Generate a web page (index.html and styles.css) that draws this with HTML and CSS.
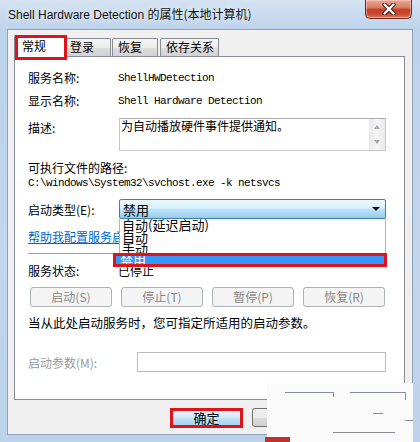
FILE: index.html
```html
<!DOCTYPE html>
<html lang="zh-CN">
<head>
<meta charset="utf-8">
<title>Shell Hardware Detection 的属性</title>
<link rel="stylesheet" href="styles.css">
</head>
<body>
<div class="window">
  <div class="titlebar">
    <span class="title">Shell Hardware Detection <span class="zh">的属性(本地计算机)</span></span>
    <div class="close">
      <svg width="14" height="12" viewBox="0 0 14 12">
        <path d="M2.5 1.5 L11.5 10.5 M11.5 1.5 L2.5 10.5" stroke="#4a1f18" stroke-width="4.4" stroke-linecap="round"/>
        <path d="M2.5 1.5 L11.5 10.5 M11.5 1.5 L2.5 10.5" stroke="#ffffff" stroke-width="2.4" stroke-linecap="round"/>
      </svg>
    </div>
  </div>

  <div class="client">
    <div class="tabs">
      <div class="tab active">常规</div>
      <div class="tab t2">登录</div>
      <div class="tab t3">恢复</div>
      <div class="tab t4">依存关系</div>
      <div class="mark tab-mark"></div>
    </div>

    <div class="panel">
      <div class="row">
        <span class="lbl">服务名称:</span>
        <span class="val">ShellHWDetection</span>
      </div>
      <div class="row r2">
        <span class="lbl">显示名称:</span>
        <span class="val">Shell Hardware Detection</span>
      </div>
      <div class="desc-row">
        <span class="lbl">描述:</span>
        <div class="textarea">
          <div class="txt">为自动播放硬件事件提供通知。</div>
          <div class="scroll">
            <span class="arr up"></span>
            <span class="arr down"></span>
          </div>
        </div>
      </div>
      <div class="row r-path">可执行文件的路径:</div>
      <div class="path">C:\windows\System32\svchost.exe -k netsvcs</div>

      <div class="type-row">
        <span class="lbl">启动类型(E):</span>
        <div class="select-wrap">
          <div class="select"><span>禁用</span><span class="caret"></span></div>
          <div class="list">
            <div class="opt">自动(延迟启动)</div>
            <div class="opt">自动</div>
            <div class="opt">手动</div>
          </div>
          <div class="sel">禁用</div>
        </div>
      </div>

      <div class="row r-link"><span class="link">帮助我配置服务启动选项。</span></div>
      <div class="sep"></div>

      <div class="row r-status">
        <span class="lbl">服务状态:</span>
        <span>已停止</span>
      </div>

      <div class="btns">
        <div class="btn dis">启动(S)</div>
        <div class="btn dis">停止(T)</div>
        <div class="btn dis">暂停(P)</div>
        <div class="btn dis">恢复(R)</div>
      </div>

      <div class="row r-info">当从此处启动服务时，您可指定所适用的启动参数。</div>

      <div class="param-row">
        <span class="lbl plbl">启动参数(M):</span>
        <div class="input"></div>
      </div>
    </div>

    <div class="footer">
      <div class="mark ok-mark"><div class="okbtn">确定</div></div>
      <div class="cancel"></div>
    </div>
  </div>

  <div class="smear">
    <span class="ln" style="left:18px;top:9px;width:48px"></span>
    <span class="ln v" style="left:66px;top:9px;height:5px"></span>
    <span class="ln" style="left:83px;top:9px;width:55px"></span>
    <span class="ln v" style="left:138px;top:9px;height:8px"></span>
    <span class="ln" style="left:106px;top:30px;width:10px"></span>
    <span class="ln" style="left:138px;top:37px;width:8px"></span>
    <span class="ln" style="left:66px;top:49px;width:62px"></span>
  </div>
  <div class="redstrip"></div>
</div>
</body>
</html>
```

FILE: styles.css
```css
* { box-sizing: border-box; }
html, body { margin: 0; padding: 0; }
body {
  width: 420px;
  height: 442px;
  overflow: hidden;
  background: #c3d7ed;
  font-family: "Noto Sans CJK SC", "Liberation Sans", sans-serif;
  font-size: 12px;
  color: #000;
}

.window {
  position: relative;
  width: 420px;
  height: 442px;
  padding: 0 7px 7px 7px;
  display: flex;
  flex-direction: column;
  background: linear-gradient(#d5e3f2 0, #bdd3eb 29px, #c2d7ee 60%, #bcd2ea 100%);
}

.titlebar {
  height: 29px;
  display: flex;
  align-items: center;
  padding-left: 1px;
  padding-bottom: 1px;
}
.title {
  font-family: "Liberation Sans", "Noto Sans CJK SC", sans-serif;
  font-size: 12px;
  line-height: 16px;
  color: #111;
  text-shadow: 0 0 6px rgba(255, 255, 255, 0.9);
}
.title .zh { font-family: "Noto Sans CJK SC", sans-serif; }

.close {
  position: absolute;
  top: 0;
  left: 365px;
  width: 47px;
  height: 19px;
  border: 1px solid #6e2b21;
  border-top: none;
  border-radius: 0 0 5px 5px;
  background: linear-gradient(#eba894 0, #d9826a 40%, #c23c23 55%, #c94d34 80%, #d97a60 100%);
  display: flex;
  align-items: center;
  justify-content: center;
  box-shadow: inset 0 0 0 1px rgba(255, 210, 200, 0.5);
}

.client {
  flex: 1;
  position: relative;
  border: 1px solid #8ea3bb;
  background: #f0f0f0;
  padding: 5px 7px 0 6px;
}

/* tabs */
.tabs {
  position: relative;
  display: flex;
  align-items: flex-end;
  height: 21px;
  z-index: 2;
}
.tab {
  height: 18px;
  border: 1px solid #898c95;
  border-bottom: none;
  border-radius: 2px 2px 0 0;
  background: linear-gradient(#f4f4f4 0, #ececec 50%, #dedede 51%, #d2d2d2 100%);
  line-height: 16px;
  padding-left: 5px;
  white-space: nowrap;
}
.tab.active {
  width: 52px;
  height: 22px;
  margin-bottom: -1px;
  background: #fff;
  padding-left: 7px;
  line-height: 20px;
}
.tab.t2 { width: 45px; padding-left: 3px; }
.tab.t3 { width: 46px; margin-left: 1px; }
.tab.t4 { width: 59px; margin-left: 2px; }

.mark {
  border: 3px solid #e0131b;
}
.tab-mark {
  position: absolute;
  left: 1px;
  top: 0;
  width: 52px;
  height: 25px;
}

/* panel */
.panel {
  position: relative;
  height: 344px;
  border: 1px solid #898c95;
  background: #fff;
  padding: 13px 18px 0 13px;
}
.row {
  display: flex;
  align-items: center;
  height: 16px;
  line-height: 16px;
  white-space: nowrap;
}
.lbl { width: 90px; flex: none; }
.val {
  font-family: "Liberation Mono", monospace;
  font-size: 11px;
  letter-spacing: -0.6px;
}
.r2 { margin-top: 7px; }

.desc-row {
  display: flex;
  align-items: flex-start;
  margin-top: 9px;
}
.desc-row .lbl { padding-top: 2px; line-height: 16px; }
.textarea {
  margin-left: 1px;
  width: 267px;
  height: 33px;
  border: 1px solid #c5c8cc;
  border-top-color: #abadb3;
  display: flex;
}
.textarea .txt {
  flex: 1;
  padding: 0 0 0 1px;
  line-height: 14px;
}
.scroll {
  width: 16px;
  background: linear-gradient(90deg, #eaeaea, #f5f5f5 50%, #eaeaea);
  display: flex;
  flex-direction: column;
  justify-content: space-between;
  align-items: center;
  padding: 6px 0 6px;
}
.arr {
  width: 0;
  height: 0;
  border-left: 3.5px solid transparent;
  border-right: 3.5px solid transparent;
}
.arr.up { border-bottom: 4px solid #a6a6a6; }
.arr.down { border-top: 4px solid #a6a6a6; }

.r-path { margin-top: 9px; }
.path {
  height: 14px;
  line-height: 14px;
  font-family: "Liberation Mono", monospace;
  font-size: 11px;
  letter-spacing: -0.6px;
  white-space: nowrap;
}

.type-row {
  display: flex;
  align-items: center;
  margin-top: 9px;
  height: 20px;
}
.select-wrap {
  position: relative;
  margin-left: 1px;
  width: 267px;
  height: 20px;
}
.select {
  height: 20px;
  border: 1px solid #3c7fb1;
  border-radius: 2px;
  background: linear-gradient(#eaf6fd 0, #d9f0fc 45%, #bee6fd 50%, #97cbea 100%);
  display: flex;
  align-items: center;
  justify-content: space-between;
  padding: 0 5px 0 3px;
  font-size: 13px;
}
.caret {
  width: 0;
  height: 0;
  border-left: 4px solid transparent;
  border-right: 4px solid transparent;
  border-top: 4px solid #111;
}
.list {
  position: absolute;
  left: 0;
  top: 20px;
  width: 267px;
  height: 47px;
  background: #fff;
  border: 1px solid #b4b4b4;
  border-top: none;
  z-index: 5;
}
.opt {
  height: 12px;
  line-height: 12px;
  padding-left: 2px;
  font-size: 13px;
  white-space: nowrap;
}
.sel {
  position: absolute;
  left: -6px;
  top: 54px;
  width: 274px;
  height: 14px;
  border: 3px solid #e0131b;
  background: #3399ff;
  color: #fff;
  overflow: hidden;
  z-index: 6;
  font-size: 13px;
  line-height: 8px;
  padding-left: 4px;
}

.r-link { margin-top: 10px; }
.link {
  color: #0066cc;
  text-decoration: underline;
}
.sep {
  margin-top: 8px;
  height: 2px;
  border-top: 1px solid #a0a0a0;
  border-bottom: 1px solid #fff;
}
.r-status { margin-top: 8px; }

.btns {
  display: grid;
  grid-template-columns: repeat(4, 82px);
  column-gap: 9px;
  margin-top: 8px;
  margin-left: 2px;
}
.btn {
  height: 20px;
  border: 1px solid #adb2b5;
  border-radius: 3px;
  background: #f4f4f4;
  display: flex;
  align-items: center;
  justify-content: center;
  line-height: 16px;
}
.btn.dis { color: #8a8a8a; }

.r-info { margin-top: 8px; font-size: 12.5px; }

.param-row {
  display: flex;
  align-items: center;
  margin-top: 21px;
  height: 20px;
}
.plbl { width: 109px; color: #9a9a9a; }
.input {
  width: 249px;
  height: 20px;
  border: 1px solid #b9bcc0;
  background: #fff;
}

/* footer */
.footer {
  display: flex;
  align-items: flex-start;
  padding-top: 8px;
  padding-left: 156px;
}
.ok-mark {
  width: 73px;
  height: 20px;
}
.okbtn {
  height: 14px;
  background: linear-gradient(#e6f3fb 0, #d3ebf9 45%, #bfe1f6 55%, #a9d4ef 100%);
  display: flex;
  align-items: center;
  justify-content: center;
  font-size: 13px;
  line-height: 14px;
}
.cancel {
  margin-left: 9px;
  width: 40px;
  height: 19px;
  border: 1px solid #707070;
  border-radius: 3px;
  background: linear-gradient(#f2f2f2 0, #ebebeb 50%, #dddddd 51%, #cfcfcf 100%);
}

/* image artifact area at the bottom right */
.smear {
  position: absolute;
  left: 267px;
  top: 383px;
  width: 146px;
  height: 59px;
  background: #fbfbfb;
}
.ln {
  position: absolute;
  height: 1px;
  background: #8a8f96;
}
.ln.v { width: 1px; }
.redstrip {
  position: absolute;
  left: 265px;
  top: 437px;
  width: 25px;
  height: 5px;
  background: #c2302a;
}
```
